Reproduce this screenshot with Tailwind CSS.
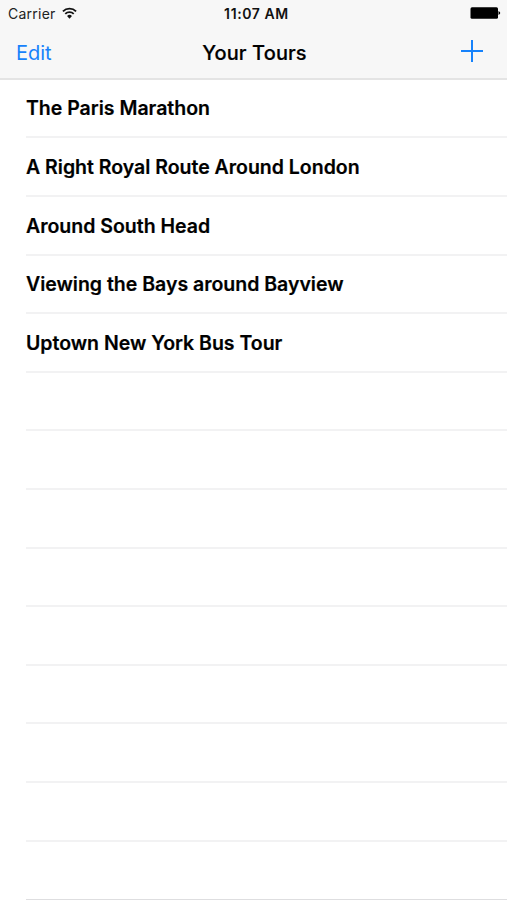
<!DOCTYPE html>
<html lang="en"><head><meta charset="utf-8"><title>Your Tours</title>
<script src="https://cdn.jsdelivr.net/npm/@tailwindcss/browser@4"></script></head>
<body class="bg-white text-black font-['Inter',sans-serif] overflow-hidden">
<div class="w-[507px] h-[900px] flex flex-col overflow-hidden">
<header class="h-20 shrink-0 bg-[#f7f7f7] border-b-2 border-[#e4e4e4]">
<div class="h-[27px] grid grid-cols-[1fr_auto_1fr] items-center pl-[8px] pr-[6px] text-[14px]">
<div class="flex items-center gap-[6px] text-[#222]"><span class="tracking-[0.25px]">Carrier</span>
<svg class="w-[15px] h-[12px] -mt-[2px]" viewBox="0 0 16 12" fill="none" stroke="#111" stroke-width="2"><path d="M1 4.2a10 10 0 0 1 14 0M3.5 6.9a6.5 6.5 0 0 1 9 0"/><path d="M8 12L5.4 9.2a3.8 3.8 0 0 1 5.2 0Z" fill="#111" stroke="none"/></svg></div>
<div class="relative left-[2px] text-center font-semibold tracking-[0.6px] text-[14px] leading-[19px] text-[#111]">11:07 AM</div>
<svg class="justify-self-end w-[31px] h-3 -mt-px" viewBox="0 0 31 12"><rect x=".5" y=".3" width="27.5" height="11.4" rx="1.5"/><path d="M28.5 4q3.5 2 0 4z"/></svg>
</div>
<div class="h-[51px] grid grid-cols-[1fr_auto_1fr] items-center pl-4 pr-[24px] text-[20px]">
<span class="text-[#1682fb]">Edit</span><span class="relative left-[5px] text-center font-medium tracking-[0.1px] [-webkit-text-stroke:0.2px_black]">Your Tours</span>
<svg class="justify-self-end w-[22px] h-[22px] -mt-[3px]" viewBox="0 0 22 22" stroke="#1682fb" stroke-width="2"><path d="M11 0v22M0 11h22"/></svg>
</div></header>
<ul class="pl-[26px] text-[19.5px] font-semibold tracking-[-0.01px] [-webkit-text-stroke:0.2px_black]">
<li class="h-[58.6px] pt-[2px] flex items-center border-b-2 border-[#f2f2f3] mt-[-0.2px]">The Paris Marathon</li>
<li class="h-[58.6px] pt-[2px] flex items-center border-b-2 border-[#f2f2f3]">A Right Royal Route Around London</li>
<li class="h-[58.6px] pt-[2px] flex items-center border-b-2 border-[#f2f2f3]">Around South Head</li>
<li class="h-[58.6px] pt-[2px] flex items-center border-b-2 border-[#f2f2f3]">Viewing the Bays around Bayview</li>
<li class="h-[58.6px] pt-[2px] flex items-center border-b-2 border-[#f2f2f3]">Uptown New York Bus Tour</li>
<li class="h-[58.6px] border-b-2 border-[#f2f2f3]"></li>
<li class="h-[58.6px] border-b-2 border-[#f2f2f3]"></li>
<li class="h-[58.6px] border-b-2 border-[#f2f2f3]"></li>
<li class="h-[58.6px] border-b-2 border-[#f2f2f3]"></li>
<li class="h-[58.6px] border-b-2 border-[#f2f2f3]"></li>
<li class="h-[58.6px] border-b-2 border-[#f2f2f3]"></li>
<li class="h-[58.6px] border-b-2 border-[#f2f2f3]"></li>
<li class="h-[58.6px] border-b-2 border-[#f2f2f3]"></li>
<li class="h-[58.2px] border-b border-[#dedee0]"></li>
</ul></div></body></html>
